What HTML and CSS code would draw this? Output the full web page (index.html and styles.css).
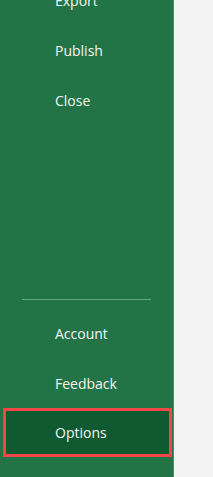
FILE: index.html
```html
<!DOCTYPE html>
<html lang="en">
<head>
  <meta charset="UTF-8">
  <meta name="viewport" content="width=device-width, initial-scale=1.0">
  <title>File menu</title>
  <link rel="stylesheet" href="styles.css">
</head>
<body>
  <div class="backstage">
    <nav class="sidebar">
      <div class="nav-item">Export</div>
      <div class="nav-item">Publish</div>
      <div class="nav-item">Close</div>
      <div class="spacer"></div>
      <div class="divider"></div>
      <div class="nav-item">Account</div>
      <div class="nav-item">Feedback</div>
      <div class="nav-item selected">Options</div>
    </nav>
    <div class="content"></div>
  </div>
</body>
</html>
```

FILE: styles.css
```css
html, body {
  margin: 0;
  height: 100%;
  overflow: hidden;
}
body {
  font-family: "Open Sans", "Noto Sans", sans-serif;
  background-color: #f3f3f3;
}
.backstage {
  display: flex;
  height: 100%;
}
.sidebar {
  width: 174px;
  border-right: 1px solid #4a9068;
  background-color: #227446;
  display: flex;
  flex-direction: column;
  margin-top: -25px;
  height: calc(100% + 25px);
  padding-bottom: 20px;
  box-sizing: border-box;
}
.nav-item {
  height: 50px;
  flex: none;
  display: flex;
  align-items: center;
  padding-left: 55px;
  color: #f5f5f5;
  font-size: 14px;
}
.spacer {
  flex: 1;
}
.divider {
  height: 1px;
  margin: 0 22px 8px 22px;
  background-color: #6aa583;
  flex: none;
}
.nav-item.selected {
  height: 49px;
  margin: 0 1px 0 3px;
  padding-left: 49px;
  border: 3px solid #f24646;
  background-color: #0f5a30;
  box-sizing: border-box;
}
.content {
  flex: 1;
}
```
